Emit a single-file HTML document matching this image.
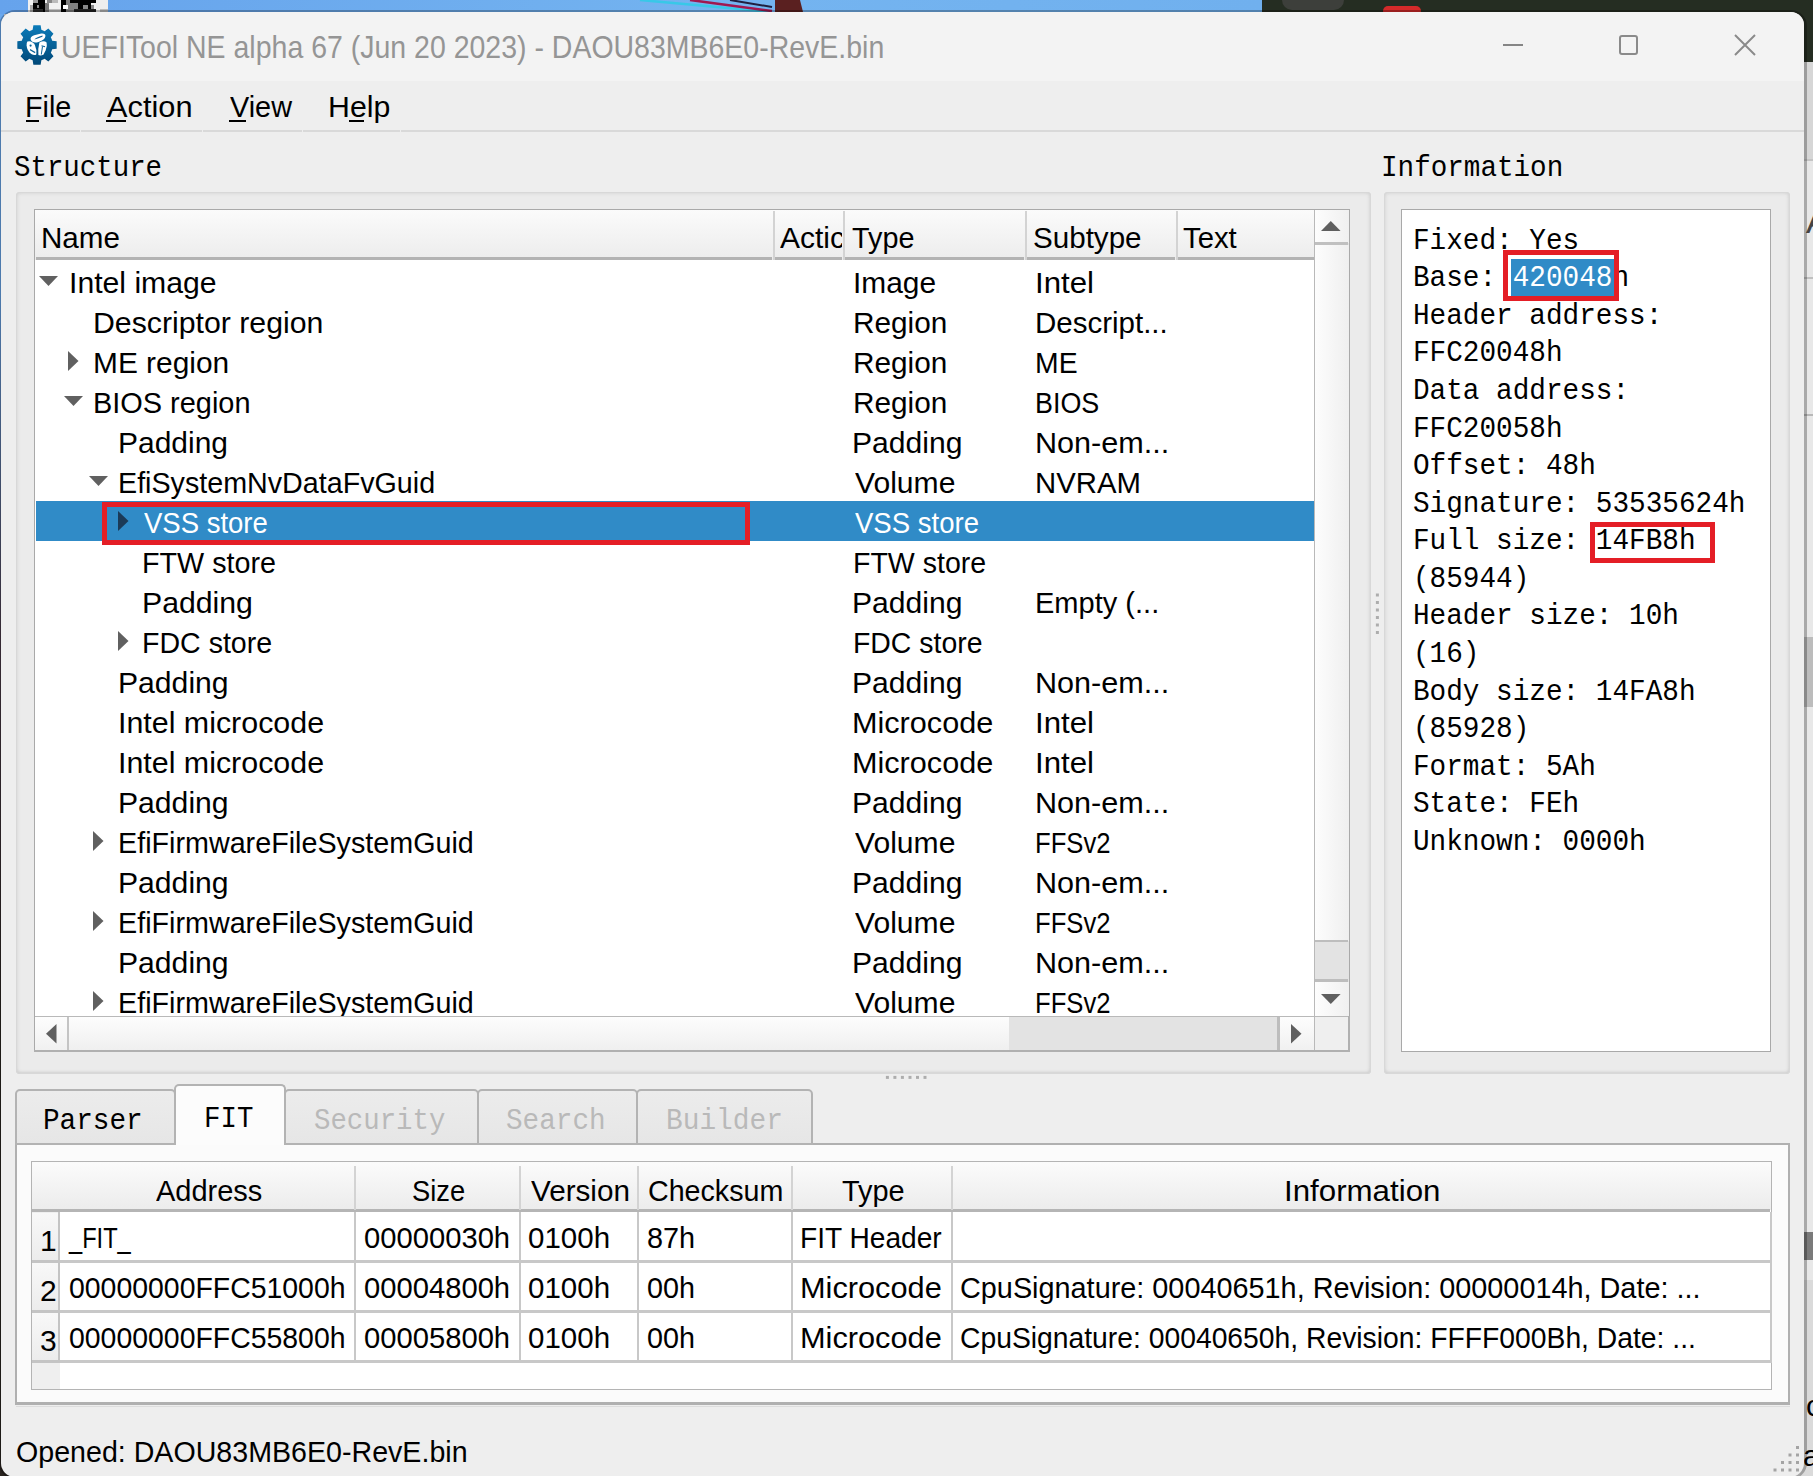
<!DOCTYPE html>
<html><head><meta charset="utf-8"><style>
*{box-sizing:border-box;margin:0;padding:0}
html,body{width:1813px;height:1476px;overflow:hidden;background:#dedede;}
body{position:relative;font-family:'Liberation Sans', sans-serif;}
.a{position:absolute}
.t{position:absolute;white-space:pre}
u{text-decoration:none;border-bottom:2px solid #000;}
</style></head>
<body>
<div class="a" style="left:0px;top:0px;width:1813px;height:1476px;background:#e2e2e2"></div><div class="a" style="left:0px;top:0px;width:1262px;height:14px;background:linear-gradient(90deg,#66a3ec,#74b4f0 60%,#70b0ee)"></div><div class="a" style="left:1262px;top:0px;width:551px;height:64px;background:#252d22"></div><div class="a" style="left:1282px;top:0px;width:62px;height:10px;border-radius:0 0 30px 30px;background:#3d3f3b"></div><div class="a" style="left:1383px;top:6px;width:38px;height:10px;border-radius:8px;background:#d42a2a"></div><div class="a" style="left:28px;top:0px;width:80px;height:12px;background:#efefef"></div><svg class="a" style="left:28px;top:0" width="80" height="12" shape-rendering="crispEdges"><rect x="0" y="0" width="80" height="12" fill="#f0f0f0"/><rect x="2" y="5" width="3" height="7" fill="#aaa"/><rect x="5" y="0" width="5" height="3" fill="#999"/><rect x="5" y="3" width="12" height="9" fill="#000"/><rect x="10" y="0" width="7" height="3" fill="#000"/><rect x="9" y="5" width="2" height="3" fill="#888"/><rect x="5" y="9" width="10" height="3" fill="#2a2a2a"/><rect x="17" y="3" width="4" height="9" fill="#777"/><rect x="19" y="0" width="5" height="4" fill="#888"/><rect x="21" y="3" width="12" height="6" fill="#f2f2f2"/><rect x="24" y="0" width="6" height="3" fill="#bbb"/><rect x="21" y="9" width="12" height="3" fill="#bdbdbd"/><rect x="33" y="0" width="5" height="12" fill="#000"/><rect x="38" y="0" width="4" height="12" fill="#808080"/><rect x="35" y="5" width="5" height="4" fill="#fff"/><rect x="42" y="3" width="8" height="9" fill="#808080"/><rect x="42" y="0" width="26" height="3" fill="#000"/><rect x="50" y="3" width="13" height="6" fill="#000"/><rect x="55" y="5" width="5" height="4" fill="#888"/><rect x="63" y="5" width="3" height="4" fill="#888"/><rect x="46" y="9" width="26" height="3" fill="#222"/><rect x="68" y="0" width="12" height="12" fill="#eee"/><rect x="72" y="9" width="8" height="3" fill="#bbb"/></svg><svg class="a" style="left:600px;top:0" width="240" height="14"><path d="M40 0 L172 12" stroke="#38c8e8" stroke-width="2.5"/><path d="M90 0 L172 11" stroke="#a01850" stroke-width="2.5"/><path d="M130 0 L172 7" stroke="#202040" stroke-width="2"/><path d="M175 0 L200 0 L203 12 L175 12 Z" fill="#5a2020"/></svg><div class="a" style="left:1800px;top:62px;width:13px;height:1414px;background:#e8e8e8"></div><div class="a" style="left:1800px;top:62px;width:13px;height:98px;background:#d6d6d6"></div><div class="a" style="left:1800px;top:159px;width:13px;height:2px;background:#c4c4c4"></div><div class="t" style="left:1806.00px;top:198.82px;font:34px/44px 'Liberation Sans', sans-serif;color:#444;">A</div><div class="a" style="left:1800px;top:277px;width:13px;height:2px;background:#c0c0c0"></div><div class="a" style="left:1800px;top:414px;width:13px;height:2px;background:#b8b8b8"></div><div class="a" style="left:1800px;top:637px;width:13px;height:70px;background:#bcbcbc"></div><div class="a" style="left:1800px;top:1232px;width:13px;height:28px;background:#7a7a7a"></div><div class="a" style="left:1800px;top:1280px;width:13px;height:196px;background:#dadada"></div><div class="a" style="left:0px;top:1430px;width:30px;height:46px;background:#2a2420"></div><div class="a" style="left:0px;top:14px;width:4px;height:1462px;background:linear-gradient(#6aa8ee 0,#6aa8ee 280px,#4a3a48 620px,#2a2420 1000px)"></div><div class="t" style="left:1806.00px;top:1385.70px;font:30px/39px 'Liberation Sans', sans-serif;color:#000;">c</div><div class="t" style="left:1803.00px;top:1435.70px;font:30px/39px 'Liberation Sans', sans-serif;color:#000;">a</div><div class="a" style="left:-1px;top:10px;width:1808px;height:1469px;border-radius:16px;background:rgba(0,0,0,0.27)"></div><div class="a" style="left:1px;top:12px;width:1803px;height:1465px;border-radius:14px;background:#eeeeee"></div><div class="a" style="left:1px;top:12px;width:1803px;height:69px;border-radius:13px 13px 0 0;background:#f3f3f3"></div><svg class="a" style="left:16px;top:24px" width="42" height="42" viewBox="0 0 42 42">
<defs><linearGradient id="g" x1="0" y1="0" x2="0" y2="1"><stop offset="0" stop-color="#0b7bb9"/><stop offset="1" stop-color="#004878"/></linearGradient></defs>
<path fill="url(#g)" d="M14.95 6.40 L16.64 5.81 L17.36 1.33 L24.64 1.33 L25.36 5.81 L27.05 6.40 L27.05 6.40 L28.66 7.18 L32.33 4.52 L37.48 9.67 L34.82 13.34 L35.60 14.95 L35.60 14.95 L36.19 16.64 L40.67 17.36 L40.67 24.64 L36.19 25.36 L35.60 27.05 L35.60 27.05 L34.82 28.66 L37.48 32.33 L32.33 37.48 L28.66 34.82 L27.05 35.60 L27.05 35.60 L25.36 36.19 L24.64 40.67 L17.36 40.67 L16.64 36.19 L14.95 35.60 L14.95 35.60 L13.34 34.82 L9.67 37.48 L4.52 32.33 L7.18 28.66 L6.40 27.05 L6.40 27.05 L5.81 25.36 L1.33 24.64 L1.33 17.36 L5.81 16.64 L6.40 14.95 L6.40 14.95 L7.18 13.34 L4.52 9.67 L9.67 4.52 L13.34 7.18 L14.95 6.40 Z"/>
<g fill="#fff">
<path d="M14.6 15.2 Q14.2 12.8 18.2 11.2 L25.2 9.6 Q29.8 9.2 29.4 12.2 Q29 15.6 22.6 18 Q16.2 19.8 14.6 15.2 Z"/>
<path d="M11.4 17.6 Q15.8 16.2 18.8 20.8 Q21 26.2 20.4 30.2 Q19 32 15.2 30 Q11 27 10.6 21.6 Q10.5 18.4 11.4 17.6 Z"/>
<path d="M23.4 18.6 Q27.8 16.2 30.6 18.4 Q31.6 22.2 29.6 26.6 L27.4 30.8 Q24.2 32 22.4 31 Q21.8 24.6 23.4 18.6 Z"/>
</g>
<g fill="#0a6399"><path d="M18.4 15.6 Q19.6 13.6 26.6 11.6 L26.4 12.8 Q21 14.8 18.4 15.6 Z"/><circle cx="14.6" cy="21.6" r="1.1"/><path d="M14.2 25 L19.4 28 L19 29.2 L13.8 26.2 Z"/><path d="M25.6 21.2 L29.2 22.2 L28.9 23.2 L25.4 22.2 Z"/><path d="M27 22.6 L25.8 30.6 L24.8 30.6 L26 22.6 Z"/></g>
</svg><div class="t" style="left:61.13px;top:26.63px;font:30.5px/40px 'Liberation Sans', sans-serif;color:#959595;transform:scaleX(0.9339);transform-origin:0 0;">UEFITool NE alpha 67 (Jun 20 2023) - DAOU83MB6E0-RevE.bin</div><div class="a" style="left:1503px;top:44px;width:20px;height:2px;background:#858585"></div><div class="a" style="left:1619px;top:35px;width:19px;height:20px;border:2px solid #8a8a8a;border-radius:3px"></div><svg class="a" style="left:1733px;top:33px" width="24" height="24"><path d="M2 2 L22 22 M22 2 L2 22" stroke="#8a8a8a" stroke-width="2"/></svg><div class="a" style="left:1px;top:130px;width:79px;height:2px;background:#d9d9d9"></div><div class="a" style="left:81px;top:130px;width:121px;height:2px;background:#d9d9d9"></div><div class="a" style="left:203px;top:130px;width:99px;height:2px;background:#d9d9d9"></div><div class="a" style="left:303px;top:130px;width:97px;height:2px;background:#d9d9d9"></div><div class="a" style="left:401px;top:130px;width:1403px;height:2px;background:#d9d9d9"></div><div class="t" style="left:24.69px;top:86.91px;font:30px/39px 'Liberation Sans', sans-serif;color:#000;transform:scaleX(0.9572);transform-origin:0 0;">File</div><div class="a" style="left:26px;top:120px;width:13px;height:2px;background:#000"></div><div class="t" style="left:107.20px;top:86.91px;font:30px/39px 'Liberation Sans', sans-serif;color:#000;transform:scaleX(1.0258);transform-origin:0 0;">Action</div><div class="a" style="left:106px;top:120px;width:20px;height:2px;background:#000"></div><div class="t" style="left:229.70px;top:86.91px;font:30px/39px 'Liberation Sans', sans-serif;color:#000;transform:scaleX(0.9612);transform-origin:0 0;">View</div><div class="a" style="left:229px;top:120px;width:17px;height:2px;background:#000"></div><div class="t" style="left:328.18px;top:86.91px;font:30px/39px 'Liberation Sans', sans-serif;color:#000;transform:scaleX(1.0099);transform-origin:0 0;">Help</div><div class="a" style="left:349px;top:120px;width:15px;height:2px;background:#000"></div><div class="t" style="left:13.57px;top:149.02px;font:29.6px/38px 'Liberation Mono', monospace;color:#000;transform:scaleX(0.9263);transform-origin:0 0;">Structure</div><div class="t" style="left:1380.53px;top:149.02px;font:29.6px/38px 'Liberation Mono', monospace;color:#000;transform:scaleX(0.9327);transform-origin:0 0;">Information</div><div class="a" style="left:16px;top:192px;width:1355px;height:882px;border-radius:4px;background:#ebebeb;box-shadow:inset 0 0 0 1px #d8d8d8, inset 0 -3px 3px -1px #d0d0d0, inset -3px 0 3px -1px #d6d6d6, inset 3px 0 3px -1px #dadada, inset 0 3px 3px -1px #dadada"></div><div class="a" style="left:1384px;top:192px;width:406px;height:882px;border-radius:4px;background:#ebebeb;box-shadow:inset 0 0 0 1px #d8d8d8, inset 0 -3px 3px -1px #d0d0d0, inset -3px 0 3px -1px #d6d6d6, inset 3px 0 3px -1px #dadada, inset 0 3px 3px -1px #dadada"></div><div class="a" style="left:34px;top:209px;width:1316px;height:843px;background:#fff;border:1px solid #a9a9a9"></div><div class="a" style="left:35px;top:210px;width:1280px;height:50px;background:linear-gradient(#fbfbfb,#ececec)"></div><div class="a" style="left:36px;top:257px;width:736px;height:3px;background:#b3b3b3"></div><div class="a" style="left:775px;top:257px;width:67px;height:3px;background:#b3b3b3"></div><div class="a" style="left:845px;top:257px;width:179px;height:3px;background:#b3b3b3"></div><div class="a" style="left:1027px;top:257px;width:148px;height:3px;background:#b3b3b3"></div><div class="a" style="left:1178px;top:257px;width:136px;height:3px;background:#b3b3b3"></div><div class="a" style="left:773px;top:211px;width:2px;height:49px;background:#d3d3d3"></div><div class="a" style="left:843px;top:211px;width:2px;height:49px;background:#d3d3d3"></div><div class="a" style="left:1025px;top:211px;width:2px;height:49px;background:#d3d3d3"></div><div class="a" style="left:1176px;top:211px;width:2px;height:49px;background:#d3d3d3"></div><div class="t" style="left:40.83px;top:217.90px;font:30px/39px 'Liberation Sans', sans-serif;color:#000;transform:scaleX(0.9866);transform-origin:0 0;">Name</div><div class="t" style="left:780.00px;top:217.90px;font:30px/39px 'Liberation Sans', sans-serif;color:#000;width:62px;overflow:hidden">Actic</div><div class="t" style="left:851.80px;top:217.90px;font:30px/39px 'Liberation Sans', sans-serif;color:#000;transform:scaleX(0.9603);transform-origin:0 0;">Type</div><div class="t" style="left:1033.01px;top:217.90px;font:30px/39px 'Liberation Sans', sans-serif;color:#000;transform:scaleX(0.9862);transform-origin:0 0;">Subtype</div><div class="t" style="left:1183.40px;top:217.90px;font:30px/39px 'Liberation Sans', sans-serif;color:#000;transform:scaleX(0.9769);transform-origin:0 0;">Text</div><div class="a" style="left:35px;top:261px;width:1280px;height:755px;overflow:hidden"><svg class="a" style="left:4px;top:15px" width="20" height="11"><path d="M0 0 L19 0 L9.5 10 Z" fill="#606060"/></svg><div class="t" style="left:33.79px;top:1.70px;font:30px/39px 'Liberation Sans', sans-serif;color:#000;transform:scaleX(1.0058);transform-origin:0 0;">Intel image</div><div class="t" style="left:817.51px;top:1.70px;font:30px/39px 'Liberation Sans', sans-serif;color:#000;transform:scaleX(0.9964);transform-origin:0 0;">Image</div><div class="t" style="left:999.72px;top:1.70px;font:30px/39px 'Liberation Sans', sans-serif;color:#000;transform:scaleX(1.0407);transform-origin:0 0;">Intel</div><div class="t" style="left:58.28px;top:41.70px;font:30px/39px 'Liberation Sans', sans-serif;color:#000;transform:scaleX(1.0087);transform-origin:0 0;">Descriptor region</div><div class="t" style="left:817.51px;top:41.70px;font:30px/39px 'Liberation Sans', sans-serif;color:#000;transform:scaleX(0.9925);transform-origin:0 0;">Region</div><div class="t" style="left:999.83px;top:41.70px;font:30px/39px 'Liberation Sans', sans-serif;color:#000;transform:scaleX(0.9832);transform-origin:0 0;">Descript...</div><svg class="a" style="left:33px;top:90px" width="11" height="21"><path d="M0 0 L10.5 10 L0 20 Z" fill="#606060"/></svg><div class="t" style="left:58.31px;top:81.70px;font:30px/39px 'Liberation Sans', sans-serif;color:#000;transform:scaleX(0.9959);transform-origin:0 0;">ME region</div><div class="t" style="left:817.51px;top:81.70px;font:30px/39px 'Liberation Sans', sans-serif;color:#000;transform:scaleX(0.9925);transform-origin:0 0;">Region</div><div class="t" style="left:999.91px;top:81.70px;font:30px/39px 'Liberation Sans', sans-serif;color:#000;transform:scaleX(0.9455);transform-origin:0 0;">ME</div><svg class="a" style="left:29px;top:135px" width="20" height="11"><path d="M0 0 L19 0 L9.5 10 Z" fill="#606060"/></svg><div class="t" style="left:58.37px;top:121.70px;font:30px/39px 'Liberation Sans', sans-serif;color:#000;transform:scaleX(0.9635);transform-origin:0 0;">BIOS region</div><div class="t" style="left:817.51px;top:121.70px;font:30px/39px 'Liberation Sans', sans-serif;color:#000;transform:scaleX(0.9925);transform-origin:0 0;">Region</div><div class="t" style="left:1000.01px;top:121.70px;font:30px/39px 'Liberation Sans', sans-serif;color:#000;transform:scaleX(0.8969);transform-origin:0 0;">BIOS</div><div class="t" style="left:82.70px;top:161.70px;font:30px/39px 'Liberation Sans', sans-serif;color:#000;transform:scaleX(0.9989);transform-origin:0 0;">Padding</div><div class="t" style="left:817.49px;top:161.70px;font:30px/39px 'Liberation Sans', sans-serif;color:#000;transform:scaleX(1.0027);transform-origin:0 0;">Padding</div><div class="t" style="left:999.76px;top:161.70px;font:30px/39px 'Liberation Sans', sans-serif;color:#000;transform:scaleX(1.0191);transform-origin:0 0;">Non-em...</div><svg class="a" style="left:54px;top:215px" width="20" height="11"><path d="M0 0 L19 0 L9.5 10 Z" fill="#606060"/></svg><div class="t" style="left:82.79px;top:201.70px;font:30px/39px 'Liberation Sans', sans-serif;color:#000;transform:scaleX(0.9559);transform-origin:0 0;">EfiSystemNvDataFvGuid</div><div class="t" style="left:819.50px;top:201.70px;font:30px/39px 'Liberation Sans', sans-serif;color:#000;transform:scaleX(1.0032);transform-origin:0 0;">Volume</div><div class="t" style="left:999.85px;top:201.70px;font:30px/39px 'Liberation Sans', sans-serif;color:#000;transform:scaleX(0.9775);transform-origin:0 0;">NVRAM</div><div class="a" style="left:1px;top:240px;width:1279px;height:40px;background:#308bc7"></div><svg class="a" style="left:83px;top:250px" width="11" height="21"><path d="M0 0 L10.5 10 L0 20 Z" fill="#1b3a57"/></svg><div class="t" style="left:109.00px;top:241.70px;font:30px/39px 'Liberation Sans', sans-serif;color:#fff;transform:scaleX(0.9168);transform-origin:0 0;">VSS store</div><div class="t" style="left:819.50px;top:241.70px;font:30px/39px 'Liberation Sans', sans-serif;color:#fff;transform:scaleX(0.9183);transform-origin:0 0;">VSS store</div><div class="t" style="left:107.09px;top:281.71px;font:30px/39px 'Liberation Sans', sans-serif;color:#000;transform:scaleX(0.9570);transform-origin:0 0;">FTW store</div><div class="t" style="left:817.60px;top:281.71px;font:30px/39px 'Liberation Sans', sans-serif;color:#000;transform:scaleX(0.9511);transform-origin:0 0;">FTW store</div><div class="t" style="left:106.99px;top:321.71px;font:30px/39px 'Liberation Sans', sans-serif;color:#000;transform:scaleX(1.0074);transform-origin:0 0;">Padding</div><div class="t" style="left:817.49px;top:321.71px;font:30px/39px 'Liberation Sans', sans-serif;color:#000;transform:scaleX(1.0027);transform-origin:0 0;">Padding</div><div class="t" style="left:999.86px;top:321.71px;font:30px/39px 'Liberation Sans', sans-serif;color:#000;transform:scaleX(0.9676);transform-origin:0 0;">Empty (...</div><svg class="a" style="left:83px;top:370px" width="11" height="21"><path d="M0 0 L10.5 10 L0 20 Z" fill="#606060"/></svg><div class="t" style="left:107.10px;top:361.71px;font:30px/39px 'Liberation Sans', sans-serif;color:#000;transform:scaleX(0.9522);transform-origin:0 0;">FDC store</div><div class="t" style="left:817.61px;top:361.71px;font:30px/39px 'Liberation Sans', sans-serif;color:#000;transform:scaleX(0.9470);transform-origin:0 0;">FDC store</div><div class="t" style="left:82.69px;top:401.71px;font:30px/39px 'Liberation Sans', sans-serif;color:#000;transform:scaleX(1.0046);transform-origin:0 0;">Padding</div><div class="t" style="left:817.49px;top:401.71px;font:30px/39px 'Liberation Sans', sans-serif;color:#000;transform:scaleX(1.0027);transform-origin:0 0;">Padding</div><div class="t" style="left:999.76px;top:401.71px;font:30px/39px 'Liberation Sans', sans-serif;color:#000;transform:scaleX(1.0191);transform-origin:0 0;">Non-em...</div><div class="t" style="left:82.67px;top:441.71px;font:30px/39px 'Liberation Sans', sans-serif;color:#000;transform:scaleX(1.0128);transform-origin:0 0;">Intel microcode</div><div class="t" style="left:817.46px;top:441.71px;font:30px/39px 'Liberation Sans', sans-serif;color:#000;transform:scaleX(1.0206);transform-origin:0 0;">Microcode</div><div class="t" style="left:999.72px;top:441.71px;font:30px/39px 'Liberation Sans', sans-serif;color:#000;transform:scaleX(1.0407);transform-origin:0 0;">Intel</div><div class="t" style="left:82.67px;top:481.71px;font:30px/39px 'Liberation Sans', sans-serif;color:#000;transform:scaleX(1.0128);transform-origin:0 0;">Intel microcode</div><div class="t" style="left:817.46px;top:481.71px;font:30px/39px 'Liberation Sans', sans-serif;color:#000;transform:scaleX(1.0206);transform-origin:0 0;">Microcode</div><div class="t" style="left:999.72px;top:481.71px;font:30px/39px 'Liberation Sans', sans-serif;color:#000;transform:scaleX(1.0407);transform-origin:0 0;">Intel</div><div class="t" style="left:82.69px;top:521.71px;font:30px/39px 'Liberation Sans', sans-serif;color:#000;transform:scaleX(1.0046);transform-origin:0 0;">Padding</div><div class="t" style="left:817.49px;top:521.71px;font:30px/39px 'Liberation Sans', sans-serif;color:#000;transform:scaleX(1.0027);transform-origin:0 0;">Padding</div><div class="t" style="left:999.76px;top:521.71px;font:30px/39px 'Liberation Sans', sans-serif;color:#000;transform:scaleX(1.0191);transform-origin:0 0;">Non-em...</div><svg class="a" style="left:58px;top:570px" width="11" height="21"><path d="M0 0 L10.5 10 L0 20 Z" fill="#606060"/></svg><div class="t" style="left:82.79px;top:561.71px;font:30px/39px 'Liberation Sans', sans-serif;color:#000;transform:scaleX(0.9572);transform-origin:0 0;">EfiFirmwareFileSystemGuid</div><div class="t" style="left:819.50px;top:561.71px;font:30px/39px 'Liberation Sans', sans-serif;color:#000;transform:scaleX(1.0032);transform-origin:0 0;">Volume</div><div class="t" style="left:1000.09px;top:561.71px;font:30px/39px 'Liberation Sans', sans-serif;color:#000;transform:scaleX(0.8557);transform-origin:0 0;">FFSv2</div><div class="t" style="left:82.69px;top:601.71px;font:30px/39px 'Liberation Sans', sans-serif;color:#000;transform:scaleX(1.0046);transform-origin:0 0;">Padding</div><div class="t" style="left:817.49px;top:601.71px;font:30px/39px 'Liberation Sans', sans-serif;color:#000;transform:scaleX(1.0027);transform-origin:0 0;">Padding</div><div class="t" style="left:999.76px;top:601.71px;font:30px/39px 'Liberation Sans', sans-serif;color:#000;transform:scaleX(1.0191);transform-origin:0 0;">Non-em...</div><svg class="a" style="left:58px;top:650px" width="11" height="21"><path d="M0 0 L10.5 10 L0 20 Z" fill="#606060"/></svg><div class="t" style="left:82.79px;top:641.71px;font:30px/39px 'Liberation Sans', sans-serif;color:#000;transform:scaleX(0.9572);transform-origin:0 0;">EfiFirmwareFileSystemGuid</div><div class="t" style="left:819.50px;top:641.71px;font:30px/39px 'Liberation Sans', sans-serif;color:#000;transform:scaleX(1.0032);transform-origin:0 0;">Volume</div><div class="t" style="left:1000.09px;top:641.71px;font:30px/39px 'Liberation Sans', sans-serif;color:#000;transform:scaleX(0.8557);transform-origin:0 0;">FFSv2</div><div class="t" style="left:82.69px;top:681.71px;font:30px/39px 'Liberation Sans', sans-serif;color:#000;transform:scaleX(1.0046);transform-origin:0 0;">Padding</div><div class="t" style="left:817.49px;top:681.71px;font:30px/39px 'Liberation Sans', sans-serif;color:#000;transform:scaleX(1.0027);transform-origin:0 0;">Padding</div><div class="t" style="left:999.76px;top:681.71px;font:30px/39px 'Liberation Sans', sans-serif;color:#000;transform:scaleX(1.0191);transform-origin:0 0;">Non-em...</div><svg class="a" style="left:58px;top:730px" width="11" height="21"><path d="M0 0 L10.5 10 L0 20 Z" fill="#606060"/></svg><div class="t" style="left:82.79px;top:721.71px;font:30px/39px 'Liberation Sans', sans-serif;color:#000;transform:scaleX(0.9572);transform-origin:0 0;">EfiFirmwareFileSystemGuid</div><div class="t" style="left:819.50px;top:721.71px;font:30px/39px 'Liberation Sans', sans-serif;color:#000;transform:scaleX(1.0032);transform-origin:0 0;">Volume</div><div class="t" style="left:1000.09px;top:721.71px;font:30px/39px 'Liberation Sans', sans-serif;color:#000;transform:scaleX(0.8557);transform-origin:0 0;">FFSv2</div></div><div class="a" style="left:1314px;top:210px;width:35px;height:806px;background:#e3e3e3;border-left:1px solid #b9b9b9"></div><div class="a" style="left:1315px;top:210px;width:34px;height:33px;background:linear-gradient(90deg,#fdfdfd,#f0f0f0)"></div><svg class="a" style="left:1321px;top:221px" width="20" height="11"><path d="M0 10 L9.8 0 L19.6 10 Z" fill="#5f5f5f"/></svg><div class="a" style="left:1315px;top:242px;width:33px;height:3px;background:#c0c0c0"></div><div class="a" style="left:1315px;top:245px;width:34px;height:696px;background:linear-gradient(90deg,#fdfdfd,#efefef)"></div><div class="a" style="left:1315px;top:940px;width:33px;height:2px;background:#bdbdbd"></div><div class="a" style="left:1315px;top:979px;width:33px;height:3px;background:#bdbdbd"></div><div class="a" style="left:1315px;top:982px;width:34px;height:34px;background:linear-gradient(90deg,#fdfdfd,#f0f0f0)"></div><svg class="a" style="left:1321px;top:994px" width="20" height="11"><path d="M0 0 L19.6 0 L9.8 10 Z" fill="#5f5f5f"/></svg><div class="a" style="left:35px;top:1016px;width:1280px;height:35px;background:#e3e3e3;border-top:1px solid #b9b9b9"></div><div class="a" style="left:35px;top:1017px;width:33px;height:34px;background:linear-gradient(#fdfdfd,#f0f0f0)"></div><svg class="a" style="left:46px;top:1024px" width="11" height="20"><path d="M10.5 0 L0 9.8 L10.5 19.6 Z" fill="#5f5f5f"/></svg><div class="a" style="left:67px;top:1017px;width:2px;height:34px;background:#c4c4c4"></div><div class="a" style="left:69px;top:1017px;width:940px;height:34px;background:linear-gradient(#fdfdfd,#efefef)"></div><div class="a" style="left:1277px;top:1017px;width:3px;height:34px;background:#bdbdbd"></div><div class="a" style="left:1280px;top:1017px;width:34px;height:34px;background:linear-gradient(#fdfdfd,#f0f0f0)"></div><svg class="a" style="left:1291px;top:1024px" width="11" height="20"><path d="M0 0 L10.5 9.8 L0 19.6 Z" fill="#5f5f5f"/></svg><div class="a" style="left:1314px;top:1016px;width:35px;height:35px;background:#efefef;border-left:1px solid #b9b9b9;border-top:1px solid #b9b9b9"></div><div class="a" style="left:34px;top:1050px;width:1316px;height:2px;background:#b0b0b0"></div><div class="a" style="left:1348px;top:1016px;width:2px;height:36px;background:#b0b0b0"></div><div class="a" style="left:102px;top:502px;width:648px;height:43px;border:5px solid #e41e26"></div><div class="a" style="left:1401px;top:209px;width:370px;height:843px;background:#fff;border:1px solid #a9a9a9"></div><div class="a" style="left:1511px;top:259px;width:103px;height:37px;background:#308bc7"></div><div class="t" style="left:1413.00px;top:222.73px;font:28.8px/37px 'Liberation Mono', monospace;color:#000;transform:scaleX(0.9618);transform-origin:0 0">Fixed: Yes</div><div class="t" style="left:1413.00px;top:260.30px;font:28.8px/37px 'Liberation Mono', monospace;color:#000;transform:scaleX(0.9618);transform-origin:0 0">Base: <span style="color:#fff">420048</span>h</div><div class="t" style="left:1413.00px;top:297.87px;font:28.8px/37px 'Liberation Mono', monospace;color:#000;transform:scaleX(0.9618);transform-origin:0 0">Header address:</div><div class="t" style="left:1413.00px;top:335.44px;font:28.8px/37px 'Liberation Mono', monospace;color:#000;transform:scaleX(0.9618);transform-origin:0 0">FFC20048h</div><div class="t" style="left:1413.00px;top:373.01px;font:28.8px/37px 'Liberation Mono', monospace;color:#000;transform:scaleX(0.9618);transform-origin:0 0">Data address:</div><div class="t" style="left:1413.00px;top:410.58px;font:28.8px/37px 'Liberation Mono', monospace;color:#000;transform:scaleX(0.9618);transform-origin:0 0">FFC20058h</div><div class="t" style="left:1413.00px;top:448.15px;font:28.8px/37px 'Liberation Mono', monospace;color:#000;transform:scaleX(0.9618);transform-origin:0 0">Offset: 48h</div><div class="t" style="left:1413.00px;top:485.72px;font:28.8px/37px 'Liberation Mono', monospace;color:#000;transform:scaleX(0.9618);transform-origin:0 0">Signature: 53535624h</div><div class="t" style="left:1413.00px;top:523.29px;font:28.8px/37px 'Liberation Mono', monospace;color:#000;transform:scaleX(0.9618);transform-origin:0 0">Full size: 14FB8h</div><div class="t" style="left:1413.00px;top:560.86px;font:28.8px/37px 'Liberation Mono', monospace;color:#000;transform:scaleX(0.9618);transform-origin:0 0">(85944)</div><div class="t" style="left:1413.00px;top:598.43px;font:28.8px/37px 'Liberation Mono', monospace;color:#000;transform:scaleX(0.9618);transform-origin:0 0">Header size: 10h</div><div class="t" style="left:1413.00px;top:636.00px;font:28.8px/37px 'Liberation Mono', monospace;color:#000;transform:scaleX(0.9618);transform-origin:0 0">(16)</div><div class="t" style="left:1413.00px;top:673.57px;font:28.8px/37px 'Liberation Mono', monospace;color:#000;transform:scaleX(0.9618);transform-origin:0 0">Body size: 14FA8h</div><div class="t" style="left:1413.00px;top:711.14px;font:28.8px/37px 'Liberation Mono', monospace;color:#000;transform:scaleX(0.9618);transform-origin:0 0">(85928)</div><div class="t" style="left:1413.00px;top:748.71px;font:28.8px/37px 'Liberation Mono', monospace;color:#000;transform:scaleX(0.9618);transform-origin:0 0">Format: 5Ah</div><div class="t" style="left:1413.00px;top:786.28px;font:28.8px/37px 'Liberation Mono', monospace;color:#000;transform:scaleX(0.9618);transform-origin:0 0">State: FEh</div><div class="t" style="left:1413.00px;top:823.85px;font:28.8px/37px 'Liberation Mono', monospace;color:#000;transform:scaleX(0.9618);transform-origin:0 0">Unknown: 0000h</div><div class="a" style="left:1503px;top:250px;width:116px;height:51px;border:5px solid #e41e26"></div><div class="a" style="left:1590px;top:522px;width:125px;height:41px;border:5px solid #e41e26"></div><svg class="a" style="left:880px;top:1070px" width="60" height="16"><rect x="5.9" y="5.9" width="3" height="3" fill="#adadad"/><rect x="13.4" y="5.9" width="3" height="3" fill="#adadad"/><rect x="20.9" y="5.9" width="3" height="3" fill="#adadad"/><rect x="28.5" y="5.9" width="3" height="3" fill="#adadad"/><rect x="36.0" y="5.9" width="3" height="3" fill="#adadad"/><rect x="43.5" y="5.9" width="3" height="3" fill="#adadad"/></svg><svg class="a" style="left:1370px;top:585px" width="16" height="60"><rect x="5.9" y="8.5" width="3" height="3" fill="#adadad"/><rect x="5.9" y="16.0" width="3" height="3" fill="#adadad"/><rect x="5.9" y="23.5" width="3" height="3" fill="#adadad"/><rect x="5.9" y="31.0" width="3" height="3" fill="#adadad"/><rect x="5.9" y="38.5" width="3" height="3" fill="#adadad"/><rect x="5.9" y="46.0" width="3" height="3" fill="#adadad"/></svg><div class="a" style="left:15px;top:1143px;width:1775px;height:262px;background:#fbfbfb;border:2px solid #b0b0b0;border-bottom-width:3px"></div><div class="a" style="left:15px;top:1089px;width:161px;height:56px;background:linear-gradient(#ececec,#e6e6e6);border:2px solid #b3b3b3;border-radius:5px 5px 0 0"></div><div class="t" style="left:43.13px;top:1102.22px;font:29.6px/38px 'Liberation Mono', monospace;color:#000;transform:scaleX(0.9358);transform-origin:0 0;">Parser</div><div class="a" style="left:477px;top:1089px;width:161px;height:56px;background:linear-gradient(#ececec,#e6e6e6);border:2px solid #b3b3b3;border-radius:5px 5px 0 0"></div><div class="t" style="left:506.27px;top:1102.22px;font:29.6px/38px 'Liberation Mono', monospace;color:#b9b9b9;transform:scaleX(0.9345);transform-origin:0 0;">Search</div><div class="a" style="left:636px;top:1089px;width:177px;height:56px;background:linear-gradient(#ececec,#e6e6e6);border:2px solid #b3b3b3;border-radius:5px 5px 0 0"></div><div class="t" style="left:665.92px;top:1102.22px;font:29.6px/38px 'Liberation Mono', monospace;color:#b9b9b9;transform:scaleX(0.9407);transform-origin:0 0;">Builder</div><div class="a" style="left:284px;top:1089px;width:195px;height:56px;background:linear-gradient(#ececec,#e6e6e6);border:2px solid #b3b3b3;border-radius:5px 5px 0 0"></div><div class="t" style="left:313.88px;top:1102.22px;font:29.6px/38px 'Liberation Mono', monospace;color:#b9b9b9;transform:scaleX(0.9244);transform-origin:0 0;">Security</div><div class="a" style="left:174px;top:1084px;width:112px;height:61px;background:#fcfcfc;border:2px solid #b3b3b3;border-bottom:none;border-radius:5px 5px 0 0"></div><div class="t" style="left:203.75px;top:1099.72px;font:29.6px/38px 'Liberation Mono', monospace;color:#000;transform:scaleX(0.9264);transform-origin:0 0;">FIT</div><div class="a" style="left:176px;top:1141px;width:108px;height:4px;background:#fcfcfc"></div><div class="a" style="left:31px;top:1161px;width:1741px;height:229px;background:#fff;border:1px solid #b4b4b4"></div><div class="a" style="left:32px;top:1162px;width:1739px;height:48px;background:linear-gradient(#fbfbfb,#ececec)"></div><div class="a" style="left:32px;top:1209px;width:1738px;height:3px;background:#b5b5b5"></div><div class="a" style="left:32px;top:1212px;width:28px;height:177px;background:#efefef"></div><div class="a" style="left:32px;top:1213px;width:26px;height:48px;background:linear-gradient(#f8f8f8,#ececec)"></div><div class="a" style="left:58px;top:1212px;width:2px;height:50px;background:#c4c4c4"></div><div class="a" style="left:32px;top:1260px;width:28px;height:3px;background:#c4c4c4"></div><div class="t" style="left:40.00px;top:1220.70px;font:30px/39px 'Liberation Sans', sans-serif;color:#000;">1</div><div class="a" style="left:32px;top:1263px;width:26px;height:48px;background:linear-gradient(#f8f8f8,#ececec)"></div><div class="a" style="left:58px;top:1262px;width:2px;height:50px;background:#c4c4c4"></div><div class="a" style="left:32px;top:1310px;width:28px;height:3px;background:#c4c4c4"></div><div class="t" style="left:40.00px;top:1270.70px;font:30px/39px 'Liberation Sans', sans-serif;color:#000;">2</div><div class="a" style="left:32px;top:1313px;width:26px;height:48px;background:linear-gradient(#f8f8f8,#ececec)"></div><div class="a" style="left:58px;top:1312px;width:2px;height:50px;background:#c4c4c4"></div><div class="a" style="left:32px;top:1360px;width:28px;height:3px;background:#c4c4c4"></div><div class="t" style="left:40.00px;top:1320.70px;font:30px/39px 'Liberation Sans', sans-serif;color:#000;">3</div><div class="a" style="left:354px;top:1166px;width:2px;height:44px;background:#d3d3d3"></div><div class="a" style="left:519px;top:1166px;width:2px;height:44px;background:#d3d3d3"></div><div class="a" style="left:637px;top:1166px;width:2px;height:44px;background:#d3d3d3"></div><div class="a" style="left:791px;top:1166px;width:2px;height:44px;background:#d3d3d3"></div><div class="a" style="left:951px;top:1166px;width:2px;height:44px;background:#d3d3d3"></div><div class="a" style="left:60px;top:1260px;width:1711px;height:3px;background:#c8c8c8"></div><div class="a" style="left:60px;top:1310px;width:1711px;height:3px;background:#c8c8c8"></div><div class="a" style="left:60px;top:1360px;width:1711px;height:3px;background:#c8c8c8"></div><div class="a" style="left:354px;top:1212px;width:2px;height:151px;background:#c8c8c8"></div><div class="a" style="left:519px;top:1212px;width:2px;height:151px;background:#c8c8c8"></div><div class="a" style="left:637px;top:1212px;width:2px;height:151px;background:#c8c8c8"></div><div class="a" style="left:791px;top:1212px;width:2px;height:151px;background:#c8c8c8"></div><div class="a" style="left:951px;top:1212px;width:2px;height:151px;background:#c8c8c8"></div><div class="a" style="left:1770px;top:1212px;width:2px;height:151px;background:#c8c8c8"></div><div class="t" style="left:155.80px;top:1171.30px;font:30px/39px 'Liberation Sans', sans-serif;color:#000;transform:scaleX(0.9665);transform-origin:0 0;">Address</div><div class="t" style="left:411.79px;top:1171.30px;font:30px/39px 'Liberation Sans', sans-serif;color:#000;transform:scaleX(0.9105);transform-origin:0 0;">Size</div><div class="t" style="left:531.20px;top:1171.30px;font:30px/39px 'Liberation Sans', sans-serif;color:#000;transform:scaleX(0.9890);transform-origin:0 0;">Version</div><div class="t" style="left:647.85px;top:1171.30px;font:30px/39px 'Liberation Sans', sans-serif;color:#000;transform:scaleX(0.9548);transform-origin:0 0;">Checksum</div><div class="t" style="left:842.40px;top:1171.30px;font:30px/39px 'Liberation Sans', sans-serif;color:#000;transform:scaleX(0.9634);transform-origin:0 0;">Type</div><div class="t" style="left:1283.72px;top:1171.30px;font:30px/39px 'Liberation Sans', sans-serif;color:#000;transform:scaleX(1.0424);transform-origin:0 0;">Information</div><div class="t" style="left:69.39px;top:1217.70px;font:30px/39px 'Liberation Sans', sans-serif;color:#000;transform:scaleX(0.7884);transform-origin:0 0;">_FIT_</div><div class="t" style="left:363.73px;top:1217.70px;font:30px/39px 'Liberation Sans', sans-serif;color:#000;transform:scaleX(0.9730);transform-origin:0 0;">00000030h</div><div class="t" style="left:528.32px;top:1217.70px;font:30px/39px 'Liberation Sans', sans-serif;color:#000;transform:scaleX(0.9834);transform-origin:0 0;">0100h</div><div class="t" style="left:646.64px;top:1217.70px;font:30px/39px 'Liberation Sans', sans-serif;color:#000;transform:scaleX(0.9605);transform-origin:0 0;">87h</div><div class="t" style="left:800.33px;top:1217.70px;font:30px/39px 'Liberation Sans', sans-serif;color:#000;transform:scaleX(0.9371);transform-origin:0 0;">FIT Header</div><div class="t" style="left:68.65px;top:1267.70px;font:30px/39px 'Liberation Sans', sans-serif;color:#000;transform:scaleX(0.9474);transform-origin:0 0;">00000000FFC51000h</div><div class="t" style="left:363.73px;top:1267.70px;font:30px/39px 'Liberation Sans', sans-serif;color:#000;transform:scaleX(0.9730);transform-origin:0 0;">00004800h</div><div class="t" style="left:528.32px;top:1267.70px;font:30px/39px 'Liberation Sans', sans-serif;color:#000;transform:scaleX(0.9834);transform-origin:0 0;">0100h</div><div class="t" style="left:646.64px;top:1267.70px;font:30px/39px 'Liberation Sans', sans-serif;color:#000;transform:scaleX(0.9584);transform-origin:0 0;">00h</div><div class="t" style="left:800.15px;top:1267.70px;font:30px/39px 'Liberation Sans', sans-serif;color:#000;transform:scaleX(1.0243);transform-origin:0 0;">Microcode</div><div class="t" style="left:960.34px;top:1267.70px;font:30px/39px 'Liberation Sans', sans-serif;color:#000;transform:scaleX(0.9610);transform-origin:0 0;">CpuSignature: 00040651h, Revision: 00000014h, Date: ...</div><div class="t" style="left:68.65px;top:1317.70px;font:30px/39px 'Liberation Sans', sans-serif;color:#000;transform:scaleX(0.9474);transform-origin:0 0;">00000000FFC55800h</div><div class="t" style="left:363.73px;top:1317.70px;font:30px/39px 'Liberation Sans', sans-serif;color:#000;transform:scaleX(0.9730);transform-origin:0 0;">00005800h</div><div class="t" style="left:528.32px;top:1317.70px;font:30px/39px 'Liberation Sans', sans-serif;color:#000;transform:scaleX(0.9834);transform-origin:0 0;">0100h</div><div class="t" style="left:646.64px;top:1317.70px;font:30px/39px 'Liberation Sans', sans-serif;color:#000;transform:scaleX(0.9584);transform-origin:0 0;">00h</div><div class="t" style="left:800.15px;top:1317.70px;font:30px/39px 'Liberation Sans', sans-serif;color:#000;transform:scaleX(1.0243);transform-origin:0 0;">Microcode</div><div class="t" style="left:960.36px;top:1317.70px;font:30px/39px 'Liberation Sans', sans-serif;color:#000;transform:scaleX(0.9429);transform-origin:0 0;">CpuSignature: 00040650h, Revision: FFFF000Bh, Date: ...</div><div class="t" style="left:16.45px;top:1431.70px;font:30px/39px 'Liberation Sans', sans-serif;color:#000;transform:scaleX(0.9535);transform-origin:0 0;">Opened: DAOU83MB6E0-RevE.bin</div><div class="a" style="left:16px;top:1406px;width:1774px;height:1px;background:#dcdcdc"></div><svg class="a" style="left:1770px;top:1442px" width="34" height="34"><rect x="26.0" y="4.0" width="3" height="3" fill="#a4a4a4"/><rect x="26.0" y="11.5" width="3" height="3" fill="#a4a4a4"/><rect x="26.0" y="19.0" width="3" height="3" fill="#a4a4a4"/><rect x="26.0" y="26.5" width="3" height="3" fill="#a4a4a4"/><rect x="18.5" y="11.5" width="3" height="3" fill="#a4a4a4"/><rect x="18.5" y="19.0" width="3" height="3" fill="#a4a4a4"/><rect x="18.5" y="26.5" width="3" height="3" fill="#a4a4a4"/><rect x="11.0" y="19.0" width="3" height="3" fill="#a4a4a4"/><rect x="11.0" y="26.5" width="3" height="3" fill="#a4a4a4"/><rect x="3.5" y="26.5" width="3" height="3" fill="#a4a4a4"/></svg>
</body></html>
